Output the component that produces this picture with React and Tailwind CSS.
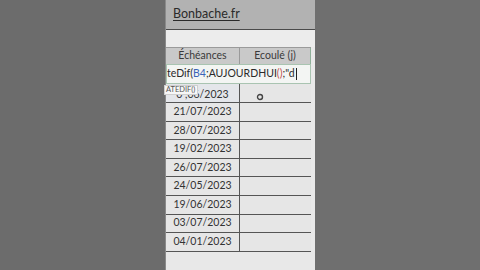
export default function App() {
  const dates = [
    "21/07/2023",
    "28/07/2023",
    "19/02/2023",
    "26/07/2023",
    "24/05/2023",
    "19/06/2023",
    "03/07/2023",
    "04/01/2023",
  ];
  return (
    <div
      className="w-[480px] h-[270px] flex bg-[#6e6e6e] overflow-hidden"
      style={{ fontFamily: "Lato, 'Open Sans', sans-serif" }}
    >
      <div className="w-[165px] shrink-0 bg-[#6c6c6c]" />
      <div className="w-[150px] shrink-0 flex flex-col bg-[#e9e9e9] border-l border-[#8a8a8a]">
        {/* site banner */}
        <div className="h-[30px] shrink-0 bg-[#b2b2b2] border-b border-[#4a4a4a] flex items-center pl-[7px]">
          <span className="text-[12.5px] text-[#2a2a2a] underline underline-offset-2 decoration-1">
            Bonbache.fr
          </span>
        </div>
        <div className="h-[17px] shrink-0 bg-[#ececec]" />
        {/* sheet */}
        <div className="w-[145px] flex flex-col text-[10.5px] whitespace-nowrap">
          <div className="h-[17px] flex bg-[#c9c9c9] border-t border-[#9a9a9a] text-[#3a3a3a]">
            <div className="w-[74px] flex items-center justify-center border-r border-[#9a9a9a]">
              Échéances
            </div>
            <div className="flex-1 flex items-center justify-center border-r border-[#8fb09a]">
              Ecoulé (j)
            </div>
          </div>
          <div className="h-[20px] bg-[#f3f5f3] border border-[#a9c4b1] flex items-center text-[#2a2a2a] overflow-hidden">
            <span>teDif(</span>
            <span className="text-[#3b64b8]">B4</span>
            <span>;AUJOURDHUI</span>
            <span className="text-[#c0504d]">()</span>
            <span>;"d</span>
            <span className="w-px h-[12px] bg-[#222] ml-px" />
          </div>
          <div className="relative h-[19px] flex border-b border-[#555] bg-[#e6e6e6] text-[#333]">
            <div className="w-[74px] flex items-center justify-center pt-[3px] border-r border-[#555] bg-[#e4e6ea]">
              0 ,06/2023
            </div>
            <div className="flex-1 relative">
              <svg width="8" height="8" viewBox="0 0 8 8" className="absolute left-[16px] top-[9px]">
                <circle cx="4" cy="4" r="2.5" fill="none" stroke="#444" strokeWidth="1.4" />
              </svg>
            </div>
            <div className="absolute left-[-2px] top-[1px] h-[10px] pl-[1px] pr-[2px] bg-[#f7f7f7] border border-[#cfcfcf] text-[7.5px] leading-[8px] text-[#555]">
              ATEDIF()
            </div>
          </div>
          {dates.map((d) => (
            <div
              key={d}
              className="h-[18.6px] flex border-b border-[#555] bg-[#e6e6e6] text-[#333]"
            >
              <div className="w-[74px] flex items-center justify-center border-r border-[#555]">
                {d}
              </div>
              <div className="flex-1" />
            </div>
          ))}
        </div>
        <div className="flex-1 bg-[#e8e8e8]" />
      </div>
      <div className="flex-1 bg-[#6f6f6f]" />
    </div>
  );
}
